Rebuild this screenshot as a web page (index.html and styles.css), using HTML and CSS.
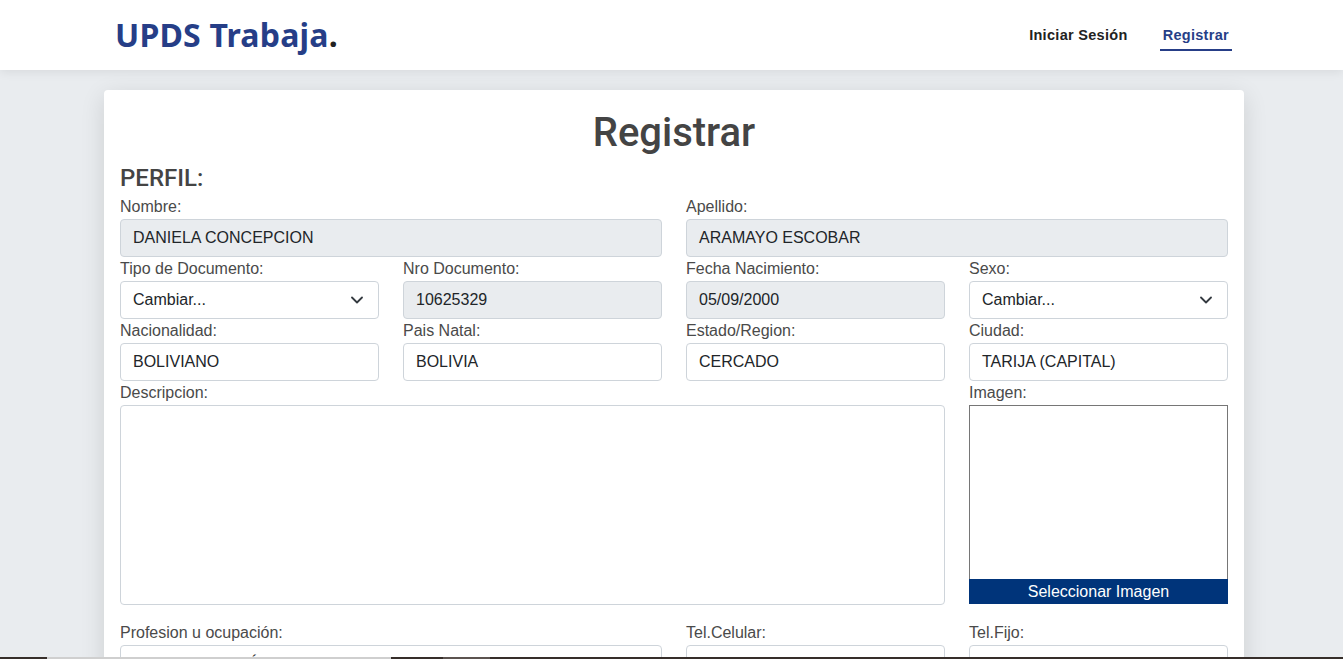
FILE: index.html
```html
<!DOCTYPE html>
<html lang="es">
<head>
<meta charset="utf-8">
<title>UPDS Trabaja - Registrar</title>
<link rel="stylesheet" href="styles.css">
</head>
<body>
<header class="topbar">
  <div class="container bar">
    <a class="logo" href="#">UPDS Trabaja<span class="dot">.</span></a>
    <nav class="nav">
      <a class="nav-link" href="#">Iniciar Sesión</a>
      <a class="nav-link active" href="#">Registrar</a>
    </nav>
  </div>
</header>
<main class="page">
  <section class="card">
    <h1 class="title">Registrar</h1>
    <h2 class="section">PERFIL:</h2>
    <div class="grid">
      <div class="field span2"><label>Nombre:</label><div class="input disabled">DANIELA CONCEPCION</div></div>
      <div class="field span2"><label>Apellido:</label><div class="input disabled">ARAMAYO ESCOBAR</div></div>

      <div class="field"><label>Tipo de Documento:</label><div class="input select">Cambiar...<svg class="chev" width="12" height="8" viewBox="0 0 12 8"><path d="M1 1.5l5 5 5-5" fill="none" stroke="#343a40" stroke-width="1.8" stroke-linecap="round" stroke-linejoin="round"/></svg></div></div>
      <div class="field"><label>Nro Documento:</label><div class="input disabled">10625329</div></div>
      <div class="field"><label>Fecha Nacimiento:</label><div class="input disabled">05/09/2000</div></div>
      <div class="field"><label>Sexo:</label><div class="input select">Cambiar...<svg class="chev" width="12" height="8" viewBox="0 0 12 8"><path d="M1 1.5l5 5 5-5" fill="none" stroke="#343a40" stroke-width="1.8" stroke-linecap="round" stroke-linejoin="round"/></svg></div></div>

      <div class="field"><label>Nacionalidad:</label><div class="input">BOLIVIANO</div></div>
      <div class="field"><label>Pais Natal:</label><div class="input">BOLIVIA</div></div>
      <div class="field"><label>Estado/Region:</label><div class="input">CERCADO</div></div>
      <div class="field"><label>Ciudad:</label><div class="input">TARIJA (CAPITAL)</div></div>

      <div class="field span3"><label>Descripcion:</label><div class="textarea"></div></div>
      <div class="field"><label>Imagen:</label>
        <div class="image-box"></div>
        <button class="img-btn" type="button">Seleccionar Imagen</button>
      </div>

      <div class="field span2 gaptop"><label>Profesion u ocupación:</label><div class="input">ADMINISTRACIÓN DE EMPRESAS</div></div>
      <div class="field gaptop"><label>Tel.Celular:</label><div class="input"></div></div>
      <div class="field gaptop"><label>Tel.Fijo:</label><div class="input"></div></div>
    </div>
  </section>
</main>
<div class="edge-strip">
  <span class="seg dark s1"></span>
  <span class="seg light s2"></span>
  <span class="seg dark s3"></span>
  <span class="seg mid s4"></span>
  <span class="seg dark s5"></span>
</div>
</body>
</html>
```

FILE: styles.css
```css
html, body {
  margin: 0;
  padding: 0;
}
body {
  background: #e9ecef;
  font-family: "Liberation Sans", Arial, sans-serif;
  color: #212529;
  height: 659px;
  overflow: hidden;
}
.topbar {
  background: #fff;
  height: 70px;
  box-shadow: 0 2px 10px rgba(0, 0, 0, 0.08);
  position: relative;
  z-index: 2;
}
.container {
  width: 1116px;
  margin: 0 auto;
  padding-left: 5px;
}
.bar {
  display: flex;
  align-items: center;
  justify-content: space-between;
  height: 70px;
}
.logo {
  font-family: "Noto Sans", "Open Sans", sans-serif;
  font-weight: 700;
  font-size: 32px;
  letter-spacing: 0.2px;
  color: #263e87;
  text-decoration: none;
  margin-top: -2px;
  margin-left: -1px;
}
.logo .dot {
  color: #222;
}
.nav {
  display: flex;
  gap: 29px;
  align-items: center;
  margin-right: 0;
}
.nav-link {
  font-family: "Liberation Sans", Arial, sans-serif;
  font-weight: 700;
  font-size: 14.5px;
  letter-spacing: 0.3px;
  color: #222;
  text-decoration: none;
  padding: 7px 3px 6px;
  margin-top: 1px;
  border-bottom: 2px solid transparent;
}
.nav-link.active {
  color: #263e87;
  border-bottom-color: #263e87;
}
.page {
  padding: 20px 0 0 5px;
}
.card {
  width: 1108px;
  margin: 0 auto;
  background: #fff;
  border-radius: 4px;
  padding: 13px 16px 20px;
  box-shadow: 0 6px 24px rgba(0, 0, 0, 0.12);
}
.title {
  margin: 0;
  font-family: Roboto, sans-serif;
  font-weight: 500;
  font-size: 40px;
  line-height: 60px;
  color: #444;
  text-align: center;
}
.section {
  margin: 0 0 2px;
  font-family: Roboto, sans-serif;
  font-weight: 500;
  font-size: 24px;
  line-height: 30px;
  color: #444;
}
.grid {
  display: grid;
  grid-template-columns: repeat(4, 259px);
  column-gap: 24px;
  row-gap: 0;
}
.field {
  display: flex;
  flex-direction: column;
}
.span2 { grid-column: span 2; }
.span3 { grid-column: span 3; }
.gaptop { margin-top: 16px; }
label {
  font-size: 16px;
  line-height: 24px;
  color: #4a4a4a;
}
.input {
  height: 36px;
  border: 1px solid #ced4da;
  border-radius: 4px;
  padding: 0 12px;
  display: flex;
  align-items: center;
  font-size: 16px;
  color: #212529;
  background: #fff;
}
.input.disabled {
  background: #e9ecef;
}
.input.select {
  justify-content: space-between;
}
.chev {
  margin-right: 3px;
}
.textarea {
  height: 198px;
  border: 1px solid #ced4da;
  border-radius: 4px;
}
.image-box {
  height: 173px;
  border: 1px solid #767676;
  border-bottom: none;
}
.img-btn {
  height: 25px;
  border: none;
  background: #00347a;
  color: #fff;
  font-family: "Liberation Sans", Arial, sans-serif;
  font-size: 16px;
  padding: 0;
  line-height: 25px;
}
.edge-strip {
  position: fixed;
  left: 0;
  right: 0;
  bottom: 0;
  height: 2px;
  display: flex;
  z-index: 5;
}
.seg { height: 2px; }
.dark { background: #362e2a; }
.light { background: #cfcfcf; }
.mid { background: #5c5450; }
.s1 { width: 47px; }
.s2 { width: 344px; }
.s3 { width: 52px; }
.s4 { width: 47px; }
.s5 { flex: 1; }
```
